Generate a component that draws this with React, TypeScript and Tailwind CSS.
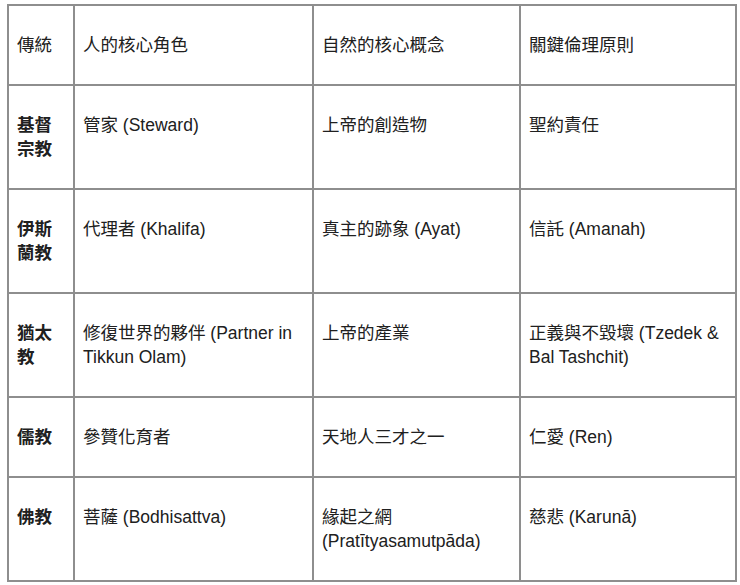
const rows: [string, string, string, string][] = [
  ["基督宗教", "管家 (Steward)", "上帝的創造物", "聖約責任"],
  ["伊斯蘭教", "代理者 (Khalifa)", "真主的跡象 (Ayat)", "信託 (Amanah)"],
  ["猶太教", "修復世界的夥伴 (Partner in Tikkun Olam)", "上帝的產業", "正義與不毀壞 (Tzedek & Bal Tashchit)"],
  ["儒教", "參贊化育者", "天地人三才之一", "仁愛 (Ren)"],
  ["佛教", "菩薩 (Bodhisattva)", "緣起之網 (Pratītyasamutpāda)", "慈悲 (Karunā)"],
];

const cell = "border-2 border-[#8e8e8e] px-2 pt-[27px] pb-[27px] align-top";

export default function App() {
  return (
    <div
      className="bg-white min-h-[585px] pl-[7px] pt-[4px] text-[#202020] text-[17.5px] leading-[24px]"
      style={{ fontFamily: '"Liberation Sans", "Noto Sans CJK TC", sans-serif' }}
    >
      <table className="w-[728px] table-fixed border-collapse border-2 border-[#8e8e8e]">
        <colgroup>
          <col className="w-[66px]" />
          <col className="w-[239px]" />
          <col className="w-[207px]" />
          <col className="w-[216px]" />
        </colgroup>
        <thead>
          <tr>
            <th className={`${cell} text-left font-normal`}>傳統</th>
            <th className={`${cell} text-left font-normal`}>人的核心角色</th>
            <th className={`${cell} text-left font-normal`}>自然的核心概念</th>
            <th className={`${cell} text-left font-normal`}>關鍵倫理原則</th>
          </tr>
        </thead>
        <tbody>
          {rows.map((r, i) => (
            <tr key={r[0]}>
              <td className={`${cell} font-bold`}>{r[0]}</td>
              <td className={cell}>{r[1]}</td>
              <td className={cell}>{r[2]}</td>
              <td className={cell}>{r[3]}</td>
            </tr>
          ))}
        </tbody>
      </table>
    </div>
  );
}
